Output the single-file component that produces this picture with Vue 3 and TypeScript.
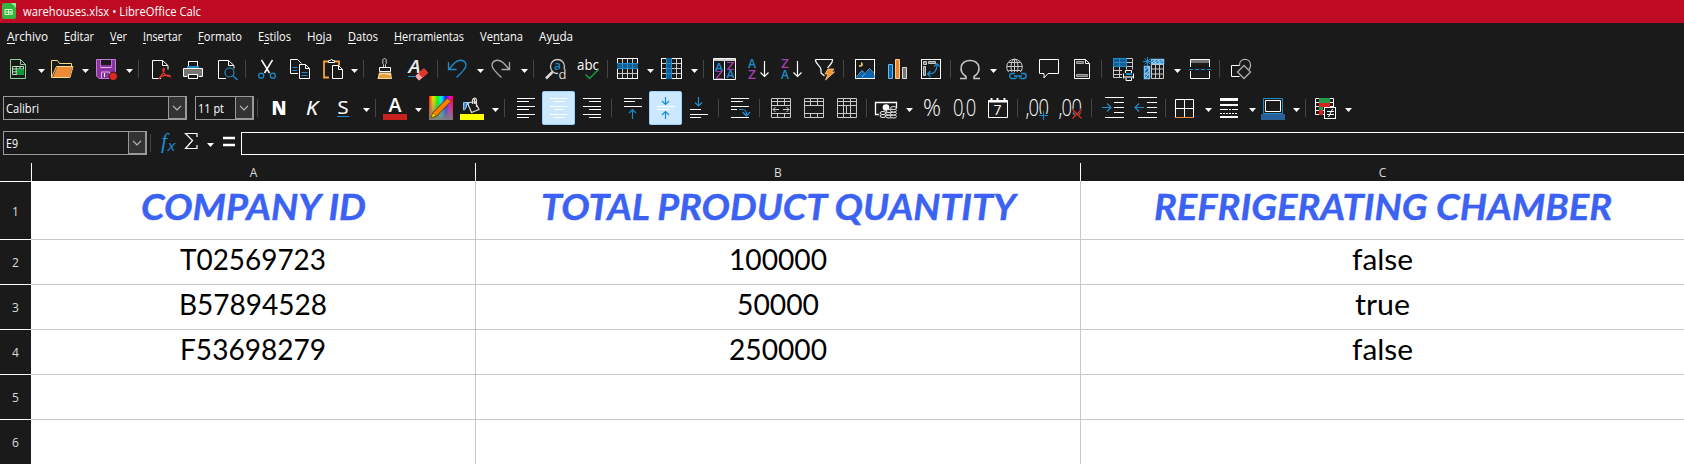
<script setup lang="ts">
interface Tool { x: number; name: string; width: number }
interface MenuEntry { text: string; w: number; ux: number; uw: number }
interface Cell { text: string; w: number }
interface Row { n: number; cells: Cell[] }

const menu: MenuEntry[] = [
  { text: 'Archivo', w: 41, ux: 0, uw: 8 },
  { text: 'Editar', w: 30, ux: 0, uw: 6 },
  { text: 'Ver', w: 17, ux: 0, uw: 7 },
  { text: 'Insertar', w: 39, ux: 0, uw: 3 },
  { text: 'Formato', w: 44, ux: 0, uw: 6 },
  { text: 'Estilos', w: 33, ux: 6, uw: 5 },
  { text: 'Hoja', w: 25, ux: 9, uw: 7 },
  { text: 'Datos', w: 30, ux: 0, uw: 8 },
  { text: 'Herramientas', w: 70, ux: 0, uw: 9 },
  { text: 'Ventana', w: 43, ux: 13, uw: 7 },
  { text: 'Ayuda', w: 34, ux: 14, uw: 7 },
]

/* Turns "start:name" pairs into consecutive slots whose widths fill the strip. */
function slots(spec: string): Tool[] {
  const raw = spec.trim().split(/\s+/).map((s) => {
    const [x, name] = s.split(':')
    return { x: Number(x), name }
  })
  return raw.map((t, i) => ({ ...t, width: (raw[i + 1]?.x ?? t.x + 24) - t.x }))
}

const standard = slots(`0:gap 6:new 38:arrow 50:open 82:arrow 95:save 126:arrow 138:sep
  149:pdf 181:print 215:preview 245:sep 255:cut 288:copy 321:paste 351:arrow 363:sep
  373:brush 406:clear 437:sep 446:undo 477:arrow 489:redo 521:arrow 533:sep
  544:find 576:spell 607:sep 616:rows 647:arrow 660:cols 691:arrow 703:sep
  713:sort 746:asc 779:desc 813:filter 843:sep 853:image 886:chart 919:pivot 950:sep
  958:omega 990:arrow 1004:link 1037:comment 1070:header 1101:sep
  1111:printarea 1143:freeze 1174:arrow 1188:split 1219:sep 1230:shapes`)

const formatting = slots(`257:sep 267:bold 300:italic 332:under 363:arrow 375:sep
  383:fontcolor 415:arrow 429:palette 460:bucket 492:arrow 504:sep
  514:left 547:center 580:right 611:sep 621:top 654:middle 687:bottom 718:sep
  728:wrap 759:sep 769:merge1 802:merge2 835:merge3 866:sep
  875:money 906:arrow 920:percent 953:number 986:calendar 1017:sep
  1026:adddec 1059:deldec 1091:sep 1101:indent 1134:outdent 1165:sep
  1174:borders 1205:arrow 1217:lines 1249:arrow 1261:bordercolor 1293:arrow 1305:sep
  1313:cond 1345:arrow`)

const formula = slots('150:sep 158:fx 181:sigma 207:arrow 217:equals')

const W = 'fill="none" stroke="#fff"'
const B = 'fill="none" stroke="#1e8bcd"'
const G = 'fill="none" stroke="#c9c9c9"'
const OS = 'font-family="Open Sans, sans-serif"'

const az = (x: number, y: number, ch: string, c: string, s = 12) =>
  `<text x="${x}" y="${y}" ${OS} font-size="${s}" font-weight="600" textLength="8" lengthAdjust="spacingAndGlyphs" fill="${c}">${ch}</text>`

const hl = '<rect x="-4.5" y="-4.5" width="32" height="33" rx="1.5" fill="#cce8ff" stroke="#99d1ff"/>'
/* Narrow light numerals; the glyph offsets are given before the horizontal squeeze. */
const digits = (xs: string, text: string) =>
  `<text transform="scale(.8 1)" x="${xs}" y="20" ${OS} font-weight="300" font-size="23" fill="#fff">${text}</text>`
const coin = (cx: number, cy: number) => `<ellipse cx="${cx}" cy="${cy}" rx="3" ry="1.5"/>`
const money =
  `<path d="M4 18.500H.5v-12h21v6" ${W} stroke-width="1.300"/><circle cx="11" cy="11.500" r="3.300" fill="#fff"/>` +
  `<g fill="#1a1a1a" stroke="#eee">` +
  [20, 17].map((y) => coin(8, y)).join('') +
  [20.500, 17.500, 15].map((y) => coin(14, y)).join('') +
  [20.500, 17.500, 14.500, 12].map((y) => coin(18.500, y)).join('') + '</g>'

const icons: Record<string, string> = {
  new: '<path d="M4.500 2.500h10l5 5v14h-15z M14.500 2.500v5h5" fill="none" stroke="#8fd19a"/><path d="M6.500 9.500h11v8h-11zM6.500 12h11M6.500 14.800h11M10.200 9.500v8M14 9.500v8" fill="none" stroke="#b9e6bf"/><rect x="11" y="12" width="7" height="6" fill="#12a13a"/><path d="M12.500 17v-2M14.500 17v-4M16.500 17v-3" stroke="#083"/>',
  open: '<path d="M1.500 20.500v-17h6l2 3h12v4M1.500 20.500l5-11h16.500l-3 11z" fill="none" stroke="#f7d98c"/><path d="M3 20l4-10h15.500l-3 10z" fill="#ee8a35"/>',
  save: '<path d="M1.500 2.500h19v19H4l-2.500-2.500z" fill="#8a359f" stroke="#c678d6"/><path d="M5.500 3h11v8h-11z" fill="#e8b2f0"/><path d="M6 3h10v6H6z" fill="#1a1a1a"/><path d="M6 8h10v2H6z" fill="#8a359f"/><path d="M6.500 21v-6h8v6" fill="#8a359f" stroke="#e6a5ef"/><path d="M9.500 16v4" stroke="#fff"/><circle cx="18.300" cy="19.300" r="4.200" fill="#e02820" stroke="#1a1a1a"/>',
  pdf: `<path d="M12 21.500H3.500v-18h10l5.500 5v4M13.500 3.500v5h5" ${W}/><path d="M10 22c1.500-3 5-6 5.300-9 .2-2.500-2-2-1.300 1 1 3.500 3 5.500 7.500 5.500-.5-1.500-4-1.700-7-.8S10 21.500 10 22" fill="none" stroke="#d9382f" stroke-width="1.300"/>`,
  print: `<rect x="7.500" y="4.500" width="9" height="7" ${W}/><rect x="6" y="9" width="12" height="2.500" fill="#1e8bcd"/><path d="M2 12h20v7H2z" fill="#77756f"/><path d="M2.500 19.500v-8h19v8h-4m-11 0h-4" ${W}/><rect x="7.500" y="17.500" width="9" height="4" fill="#1a1a1a" stroke="#fff"/>`,
  preview: `<path d="M11 21.500H3.500v-18h10l5.500 5v3M13.500 3.500v5h5" ${W}/><circle cx="14.500" cy="15.500" r="4.500" ${B} stroke-width="1.200"/><path d="M17.500 18.500l5 4.500" ${B} stroke-width="1.400"/>`,
  cut: `<path d="M6.500 3l8 13M17.500 3l-8 13" ${W} stroke-width="1.500"/><circle cx="6.200" cy="18.700" r="2.500" ${B} stroke-width="1.300"/><circle cx="17.800" cy="18.700" r="2.500" ${B} stroke-width="1.300"/>`,
  copy: `<path d="M10 16.500H2.500v-14h7l4 4" ${W}/><path d="M11.500 7.500h6l4 4v10h-10zM17.500 7.500v4h4" ${W}/><path d="M4.500 10.500h5M4.500 13.500h4.500M13.500 15.500h6M13.500 18.500h6" ${B}/>`,
  paste: `<path d="M8 20.500H3v-16h4m7 0h4v4" fill="none" stroke="#f5a23f" stroke-width="1.800"/><path d="M7.500 5.500v-2h2l1-1.500 1 1.500h2v2z" ${W}/><path d="M11.500 8.500h6l4 4v9h-10zM17.500 8.500v4h4" ${W}/>`,
  brush: '<path d="M10.500 10.500v-3l-.7-1V3c.5-2 3-2 3.400 0v3.500l-.7 1v3" fill="none" stroke="#ccc"/><path d="M6.500 10.500h11v4h-11z" fill="none" stroke="#fff"/><path d="M6 15.500h12l1 6.500H4.500z" fill="#f7d697"/><path d="M6.500 18l5-1 6 1.500.5 2.500H6z" fill="#e39a3c"/>',
  clear: `<text x="2.500" y="16" ${OS} font-size="18" font-style="italic" font-weight="600" textLength="12" lengthAdjust="spacingAndGlyphs" fill="#eee">A</text><path d="M2 19.500h7" stroke="#1e8bcd"/><g transform="rotate(-42 15.500 17.500)"><rect x="9.500" y="14.500" width="12" height="6" rx="1" fill="#f9a7ae"/><rect x="14" y="14.500" width="7.500" height="6" fill="#e0332c"/></g>`,
  undo: `<path d="M2.500 5v7.500h8M2.500 12.500l6-6.500c5-5 11.500-2.500 11.500 2.500 0 3-3.500 6.500-9.500 12" ${B} stroke-width="1.300"/>`,
  redo: '<path d="M20.500 5v7.500h-8M20.500 12.500l-6-6.500C9.500 1 3 3.500 3 8.500c0 3 3.500 6.500 9.500 12" fill="none" stroke="#aaa" stroke-width="1.300"/>',
  find: `<circle cx="13.500" cy="9.500" r="7" ${G} stroke-width="1.300"/><path d="M8.500 15L2 21.500" stroke="#ddd" stroke-width="2.500"/><text x="10" y="12.500" ${OS} font-size="12" font-weight="600" fill="#1e8bcd">a</text><rect x="14" y="12" width="10" height="11" fill="#1a1a1a"/><text x="14.500" y="22" ${OS} font-size="13" fill="#ddd">d</text>`,
  spell: `<text x="1" y="12.500" ${OS} font-size="15" textLength="22" lengthAdjust="spacingAndGlyphs" fill="#fff">abc</text><path d="M9.500 17.500l4 4L22.500 12.500" fill="none" stroke="#169b45" stroke-width="1.500"/>`,
  rows: `<rect x="1.500" y="1.500" width="20" height="20" ${W}/><path d="M6.500 2v19M11.500 2v19M16.500 2v19M2 16.500h19" ${G}/><rect x="1" y="6" width="21" height="6" fill="#145d91"/><path d="M1 6.500h21M1 11.500h21M6.500 6v6M11.500 6v6M16.500 6v6" ${B}/>`,
  cols: `<rect x="1.500" y="1.500" width="20" height="20" ${W}/><path d="M2 6.500h19M2 11.500h19M2 16.500h19M16.500 2v19" ${G}/><rect x="6" y="1" width="6" height="21" fill="#145d91"/><path d="M6.500 1v21M11.500 1v21M6 6.500h6M6 11.500h6M6 16.500h6" ${B}/>`,
  sort: `<path d="M.5 1.500h22v21H.5zM11.500 4v18" ${W}/><path d="M1 3h21" stroke="#ccc" stroke-width="2"/>${az(2, 13.500, 'A', '#1e8bcd', 11)}${az(13.500, 12.500, 'Z', '#a33fb0', 11)}${az(2, 22, 'Z', '#a33fb0', 11)}${az(13.500, 21, 'A', '#1e8bcd', 11)}`,
  asc: `${az(2, 10.500, 'A', '#1e8bcd')}${az(2, 22, 'Z', '#a33fb0')}<path d="M18.500 4v15.500m-4-4l4 4 4-4" ${W} stroke-width="1.200"/>`,
  desc: `${az(2, 10.500, 'Z', '#a33fb0')}${az(2, 22, 'A', '#1e8bcd')}<path d="M18.500 4v15.500m-4-4l4 4 4-4" ${W} stroke-width="1.200"/>`,
  filter: `<path d="M2.500 2.500h17c.5 3-3 6-5 8.500M2.500 2.500C2 6.500 8 9 8 13v3l3.500 3" ${W} stroke-width="1.200"/><path d="M15 12h6l-2.500 3h3l-9 8 2.500-6h-3z" fill="#f5912e" stroke="#f8cf85" stroke-width=".8"/>`,
  image: `<rect x="2.500" y="2.500" width="19" height="19" ${W}/><path d="M3.500 21l6-7 3 3 4-4.500 5 5.500V21z" fill="#0a64b0"/><path d="M3.500 20l5.500-6.500 2 2M9 20l7.500-8.500 4.500 5" fill="none" stroke="#5fb5f0"/><path d="M8.500 5.500c2 2 1 4.500-2.500 3.500 2 0 3-1.500 2.500-3.500" fill="#f5c36b" stroke="#f5c36b"/>`,
  chart: '<path d="M2.500 7.500h4v14h-4z" fill="#0a64b0" stroke="#6cb9ee"/><path d="M9.500 2.500h4v19h-4z" fill="#ef8430" stroke="#f8ce88"/><path d="M16.500 10.500h4v11h-4z" fill="#77756f" stroke="#ddd"/>',
  pivot: `<rect x="2.500" y="2.500" width="19" height="19" ${W}/><path d="M4.500 4.500h3v3h-3zM9.500 4.500h7v2h-7zM4.500 9.500h2v9h-2z" fill="#777" stroke="#ccc"/><path d="M8.500 17c7 0 9.500-3 9.500-10.500m-3 3l3-3 3 3M11.500 14l-3 3 3 3" ${B} stroke-width="1.200"/>`,
  omega: `<path d="M2 21.500h6v-2c-8-5-6-16 4-16s12 11 4 16v2h6" ${G} stroke-width="1.500"/>`,
  link: `<g ${G}><circle cx="10.500" cy="10" r="7.800"/><ellipse cx="10.500" cy="10" rx="3.500" ry="7.800"/><path d="M10.500 2v16M3 9.500h15M4.500 5.500h12M4.500 13.500h12"/></g><rect x="4.500" y="15" width="19" height="8" fill="#1a1a1a"/><path d="M11 16.500H8c-3 0-3 5 0 5h3q1.500 0 1.500-1.500M17 16.500h3c3 0 3 5 0 5h-3q-1.500 0-1.500-1.500M10 19h8" ${B} stroke-width="1.300"/>`,
  comment: `<path d="M2.500 2.500h19v14H11l-4 4.500v-4.500H2.500z" ${W}/>`,
  header: `<path d="M4.500 2.500h11l4 4v15h-15zM15.500 2.500v4h4" ${W}/><path d="M6.500 4.500h7v2h-7zM6.500 17.500h11v2h-11z" fill="#666" stroke="#aaa"/>`,
  printarea: `<path d="M2.500 1.500h19v19h-19zM2 5.500h19M2 9.500h19M2 13.500h19M2 17.500h19M8.500 2v19M15.500 2v19" ${G}/><path d="M2.500 1.500h13v8h-13zM2.500 5.500h13M8.500 1.500v8" fill="#145d91" stroke="#1e8bcd"/><path d="M11 12.500h13V24H11z" fill="#1a1a1a"/><path d="M14.500 16v-2.500h6V16M15 19.500v4h5.500v-4" ${W}/><path d="M15 17h6" stroke="#1e8bcd" stroke-width="2"/><path d="M13 20h10" stroke="#999" stroke-width="2"/><path d="M12.500 21.500v-5M22.500 21.500v-5" ${W}/>`,
  freeze: `<path d="M8.500 7.500h12v14h-12zM12.500 7v14M16.500 7v14M8 12h13M8 17h13" ${G}/><path d="M8.500 2.500h12v4h-12zM1.500 9.500h5v12h-5z" fill="#156aa8" stroke="#79c0f5" stroke-width="1.500"/><path d="M9 6l3-3v3l4-3v3l4-3M2 13l4-3v4l-4 3 4 0-4 4" fill="none" stroke="#a9d6f8"/><path d="M4.500 0v9M0 4.500h9M1.500 1.500l6 6M7.500 1.500l-6 6" ${B}/>`,
  split: `<path d="M2.500 10V2.500h19V10M2.500 14v7.500h19V14" ${W}/><path d="M3 4.500h18" stroke="#77756f" stroke-width="3"/><path d="M1 12.500h22" stroke="#1e8bcd" stroke-dasharray="4 2"/>`,
  shapes: `<path d="M9.500 19.500h-8v-11h8" ${W}/><path d="M9.500 9v-1c0-7.500 11-7.500 11 0 0 3-1 4-1.500 4.500" fill="none" stroke="#b5b5b5" stroke-width="1.200"/><path d="M14 8.500l6.500 6.500-6.500 6.500L7.500 15z" fill="#1a1a1a" stroke="#aaa" stroke-width="1.400"/>`,

  bold: `<text x="4.500" y="19" ${OS} font-size="19.500" font-weight="800" textLength="15" lengthAdjust="spacingAndGlyphs" fill="#fff">N</text>`,
  italic: `<text x="6" y="19" ${OS} font-size="19.500" font-weight="400" font-style="italic" textLength="12" lengthAdjust="spacingAndGlyphs" fill="#fff" stroke="#fff" stroke-width=".2">K</text>`,
  under: `<text x="5.500" y="18" ${OS} font-size="19" font-weight="400" textLength="11" lengthAdjust="spacingAndGlyphs" fill="#fff" stroke="#fff" stroke-width=".2">S</text><path d="M5 20.500h12" stroke="#1e8bcd"/>`,
  fontcolor: `<text x="5.500" y="16" ${OS} font-size="19" font-weight="600" textLength="13" lengthAdjust="spacingAndGlyphs" fill="#fff">A</text><rect y="18" width="24" height="6" fill="#c9211e"/>`,
  palette: '<defs><linearGradient id="hue"><stop offset="0" stop-color="#f20"/><stop offset=".17" stop-color="#fd0"/><stop offset=".35" stop-color="#1f0"/><stop offset=".52" stop-color="#0ef"/><stop offset=".7" stop-color="#12f"/><stop offset=".86" stop-color="#f0e"/><stop offset="1" stop-color="#f02"/></linearGradient><linearGradient id="fade" x2="0" y2="1"><stop offset=".1" stop-color="#808080" stop-opacity="0"/><stop offset="1" stop-color="#808080"/></linearGradient></defs><path d="M0 0h24v24H0z" fill="url(#hue)"/><path d="M0 0h24v24H0z" fill="url(#fade)"/><path d="M2 22l2-5.500L18.500 2 22 5.500 7.500 20z" fill="#ff8000" stroke="#6b3400"/><path d="M2 22l2-5 3 2.500z" fill="#ffe600" stroke="#665a00" stroke-width=".6"/>',
  bucket: '<path d="M3.500 14V6.500h5v2h-2V11l-2 3z" fill="#3f8ac4" stroke="#8ec4ef"/><path d="M7.500 7l7.500-1.500L19 13.500l-7.500 3zM12.500 8V4c1-2.500 3.500-2.500 4 0v7M14.500 8V3" fill="none" stroke="#ddd" stroke-width="1.200"/><rect y="18" width="24" height="6" fill="#ff0"/>',
  left: `<path d="M3 2.500h18M3 5.500h12M3 10.500h18M3 13.500h12M3 18.500h18M3 21.500h12" ${W}/>`,
  center: `${hl}<path d="M3 2.500h18M6 5.500h12M3 10.500h18M7 13.500h10M3 18.500h18M6 21.500h12" ${W}/>`,
  right: `<path d="M3 2.500h18M9 5.500h12M3 10.500h18M9 13.500h12M3 18.500h18M9 21.500h12" ${W}/>`,
  top: `<path d="M3 2.500h18M3 5.500h11M3 10.500h18" ${W}/><path d="M11.500 23v-9.500M8 17l3.500-3.500L15 17" ${B} stroke-width="1.200"/>`,
  middle: `${hl}<path d="M3 10.500h18M3 13.500h13" ${W}/><path d="M11.500 1v7M8 5l3.500 3.500L15 5M11.500 23v-7M8 19l3.500-3.500L15 19" ${B} stroke-width="1.200"/>`,
  bottom: `<path d="M3 13.500h11M3 18.500h18M3 21.500h11" ${W}/><path d="M11.500 1v9M8 6.500l3.500 3.500L15 6.500" ${B} stroke-width="1.200"/>`,
  wrap: `<path d="M3 2.500h18M3 5.500h12M3 10.500h18M3 13.500h6M3 21.500h18" ${W}/><path d="M11 13.500h3q5 0 4.500 6M14.500 16l4 4 3.500-4" ${B} stroke-width="1.200"/>`,
  merge1: `<path d="M2.500 2.500h19v19h-19zM2 5.500h20M2 9.500h20M2 17.500h20M8.500 2v8M15.500 2v8M8.500 17v5M15.500 17v5" ${G}/><path d="M4 13.500h6M6.500 11L4 13.500 6.500 16M20 13.500h-6M17.500 11l2.500 2.500-2.500 2.500" ${G}/>`,
  merge2: `<path d="M2.500 2.500h19v19h-19zM2 5.500h20M2 9.500h20M2 17.500h20M8.500 2v8M15.500 2v8M8.500 17v5M15.500 17v5" ${G}/>`,
  merge3: `<path d="M2.500 2.500h19v19h-19zM2 5.500h20M2 9.500h20M2 17.500h20M8.500 2v20M15.500 2v20M11.500 9.500v8" ${G}/>`,
  money,
  percent: `<text x="3" y="20" ${OS} font-weight="300" font-size="23.500" textLength="18" lengthAdjust="spacingAndGlyphs" fill="#fff">%</text>`,
  number: digits('0 10.500 16', '0,0'),
  calendar: `<path d="M2.500 4.500h19v17h-19z" ${W}/><path d="M2 5.500h20M5.500 2v4M11.500 2v4M18.500 2v4" stroke="#fff" stroke-width="2"/><text x="7.500" y="18.500" ${OS} font-size="14" fill="#fff">7</text>`,
  adddec: `${digits('-.5 3 15.500', ',00')}<path d="M17.500 15v9M13 19.500h9" stroke="#1a1a1a" stroke-width="3"/><path d="M17.500 15v9M13 19.500h9" ${B}/>`,
  deldec: `${digits('-.5 3 15.500', ',00')}<path d="M13.500 13.500l9 9M22.500 13.500l-9 9" stroke="#1a1a1a" stroke-width="3"/><path d="M13.500 13.500l9 9M22.500 13.500l-9 9" stroke="#e0302a" stroke-width="1.200"/>`,
  indent: `<path d="M4 1.500h19M13 6.500h10M13 11.500h10M13 16.500h10M4 21.500h19" ${W}/><path d="M1 11.500h9M6 7.500l4 4-4 4" ${B} stroke-width="1.200"/>`,
  outdent: `<path d="M4 1.500h19M13 6.500h10M13 11.500h10M13 16.500h10M4 21.500h19" ${W}/><path d="M10 11.500H1M5 7.500l-4 4 4 4" ${B} stroke-width="1.200"/>`,
  borders: `<path d="M1.500 21V3.500h18V21M10.500 4v17M2 12.500h17" ${W}/><path d="M1 21.500h19" stroke="#ee8733"/>`,
  lines: '<g stroke="#fff"><path d="M3 3.500h18" stroke-width="3"/><path d="M3 9h18" stroke-width="2"/><path d="M3 13.500h18" stroke-dasharray="8 1 2 1"/><path d="M3 17.500h18" stroke-dasharray="2 1"/><path d="M3 21h18" stroke-width="2"/></g>',
  bordercolor: `<path d="M2.500 2.500h19v15h-19z" ${B}/><path d="M4.500 4.500h15v11h-15z" ${W}/><rect y="18" width="24" height="6" fill="#2a6099"/>`,
  cond: `<path d="M2.500 2.500h18v16h-18zM2 6.500h18M2 10.500h18M2 14.500h18M6.500 2v17M16.500 2v17" ${W}/><path d="M6 2h11v5H6zM6 10h4v5H6z" fill="#259b4a"/><path d="M6 7h11v4H6zM6 14h4v5H6z" fill="#d8221d"/><rect x="11.500" y="11.500" width="11" height="11" fill="#1a1a1a" stroke="#fff"/><path d="M14 15.500h7M14 18.500h7M19.500 13l-4 8" ${W}/>`,

  fx: '<text x="3" y="17" font-family="Liberation Serif, serif" font-size="22" font-style="italic" fill="#1e8bcd">f</text><text x="9.500" y="19.500" font-family="Open Sans, sans-serif" font-size="15" font-style="italic" textLength="8" lengthAdjust="spacingAndGlyphs" fill="#1e8bcd">x</text>',
  sigma: `<path d="M16 6V2.500H4.500l7 7-7 8H16V14" ${W} stroke-width="1.200"/>`,
  equals: '<path d="M6 7h12M6 14h12" stroke="#fff" stroke-width="2.500"/>',
  arrow: '<path d="M0 12h7l-3.500 4z" fill="#fff"/>',
  sep: '<path d="M.5 3v18" stroke="#454545"/>',
  gap: '',
}

const columns = ['A', 'B', 'C']
const rows: Row[] = [
  { n: 1, cells: [{ text: 'COMPANY ID', w: 225 }, { text: 'TOTAL PRODUCT QUANTITY', w: 475 }, { text: 'REFRIGERATING CHAMBER', w: 458 }] },
  { n: 2, cells: [{ text: 'T02569723', w: 146 }, { text: '100000', w: 98 }, { text: 'false', w: 61 }] },
  { n: 3, cells: [{ text: 'B57894528', w: 148 }, { text: '50000', w: 82 }, { text: 'true', w: 55 }] },
  { n: 4, cells: [{ text: 'F53698279', w: 146 }, { text: '250000', w: 98 }, { text: 'false', w: 61 }] },
  { n: 5, cells: [{ text: '', w: 0 }, { text: '', w: 0 }, { text: '', w: 0 }] },
  { n: 6, cells: [{ text: '', w: 0 }, { text: '', w: 0 }, { text: '', w: 0 }] },
]
</script>

<template>
  <div class="window">
    <header class="titlebar">
      <svg class="logo" width="14" height="16">
        <path d="M2 0h8l4 4v10q0 2-2 2H2q-2 0-2-2V2q0-2 2-2z" fill="#35b53f" />
        <path d="M9 0l5 5V0z" fill="#90e890" />
        <path d="M3 6.500h7v5H3zM3 9h7M6.500 6.500v5" fill="none" stroke="#d9f7c8" />
        <path d="M7 8h4v4H7z" fill="#9be38d" />
      </svg>
      <svg class="label" width="179" height="23">
        <text x="0" y="15.500" textLength="178" lengthAdjust="spacingAndGlyphs">warehouses.xlsx • LibreOffice Calc</text>
      </svg>
    </header>

    <nav class="menubar">
      <svg v-for="m in menu" :key="m.text" class="label" :width="m.w" height="30">
        <text x="0" y="18" :textLength="m.w" lengthAdjust="spacingAndGlyphs">{{ m.text }}</text>
        <rect :x="m.ux" y="20" :width="m.uw" height="1" fill="#fff" />
      </svg>
    </nav>

    <div class="toolbar standard">
      <div v-for="t in standard" :key="t.x" class="slot" :style="{ width: t.width + 'px' }">
        <svg class="icon" width="24" height="24" v-html="icons[t.name]" />
      </div>
    </div>

    <div class="toolbar formatting">
      <div class="combo family">
        <svg class="label value" width="34" height="22"><text x="0" y="16" textLength="33" lengthAdjust="spacingAndGlyphs">Calibri</text></svg>
        <span class="drop"><svg width="10" height="6"><path d="M1 .8l4 4 4-4" /></svg></span>
      </div>
      <div class="combo size">
        <svg class="label value" width="27" height="22"><text x="0" y="16" textLength="26" lengthAdjust="spacingAndGlyphs">11 pt</text></svg>
        <span class="drop"><svg width="10" height="6"><path d="M1 .8l4 4 4-4" /></svg></span>
      </div>
      <div v-for="t in formatting" :key="t.x" class="slot" :style="{ width: t.width + 'px' }">
        <svg class="icon" width="24" height="24" v-html="icons[t.name]" />
      </div>
    </div>

    <div class="toolbar formula">
      <div class="combo cellname">
        <svg class="label value" width="13" height="22"><text x="0" y="16" textLength="12" lengthAdjust="spacingAndGlyphs">E9</text></svg>
        <span class="drop"><svg width="10" height="6"><path d="M1 .8l4 4 4-4" /></svg></span>
      </div>
      <div v-for="t in formula" :key="t.x" class="slot" :style="{ width: t.width + 'px' }">
        <svg class="icon" width="24" height="24" v-html="icons[t.name]" />
      </div>
      <div class="input-line"></div>
    </div>

    <main class="sheet">
      <div class="line heads">
        <div class="corner"></div>
        <div v-for="c in columns" :key="c" class="colhead">{{ c }}</div>
      </div>
      <div v-for="r in rows" :key="r.n" class="line" :class="{ first: r.n === 1 }">
        <div class="rowhead">{{ r.n }}</div>
        <div v-for="(c, i) in r.cells" :key="i" class="cell">
          <svg v-if="c.text" class="content" :width="c.w" height="44">
            <text x="0" :y="r.n === 1 ? 39 : 30" :textLength="c.w" lengthAdjust="spacingAndGlyphs">{{ c.text }}</text>
          </svg>
        </div>
      </div>
    </main>
  </div>
</template>

<style>
body {
  margin: 0;
  background: #1a1a1a;
}
</style>

<style scoped>
.window {
  width: 1684px;
  height: 464px;
  overflow: hidden;
  display: flex;
  flex-direction: column;
  background: #1a1a1a;
  color: #fff;
  font: 12px "Open Sans", "Noto Sans", sans-serif;
}
svg {
  display: block;
  overflow: visible;
  flex: none;
}
.label {
  fill: #fff;
}
.titlebar {
  height: 23px;
  flex: none;
  display: flex;
  gap: 7px;
  padding-left: 2px;
  background: #be0a22;
}
.logo {
  margin-top: 3px;
}
.menubar {
  height: 34px;
  flex: none;
  display: flex;
  gap: 16px;
  padding-left: 7px;
}
.toolbar {
  display: flex;
  flex: none;
}
.slot {
  flex: none;
  height: 24px;
}
.standard {
  height: 39px;
}
.formatting {
  height: 35px;
}
.formula {
  height: 32px;
}
.combo {
  box-sizing: border-box;
  flex: none;
  height: 24px;
  display: flex;
  justify-content: space-between;
  border: 1px solid #999;
  border-right-width: 2px;
  padding-left: 2px;
}
.family {
  width: 184px;
  margin-left: 3px;
}
.size {
  width: 59px;
  margin-left: 8px;
  margin-right: 3px;
}
.cellname {
  width: 144px;
  margin: 0 3px;
}
.drop {
  box-sizing: border-box;
  width: 17px;
  height: 22px;
  display: grid;
  place-items: center;
  background: #333;
  border-left: 1px solid #999;
  border-bottom: 1px solid #999;
}
.drop path {
  fill: none;
  stroke: #bbb;
  stroke-width: 1.2;
}
.input-line {
  box-sizing: border-box;
  flex: 1;
  height: 23px;
  margin-top: 1px;
  border: 1px solid #fff;
  border-right: 0;
}
.sheet {
  flex: 1;
}
.line {
  display: grid;
  grid-template-columns: 31px 445px 605px 603px;
  height: 45px;
}
.line.first {
  height: 58px;
}
.heads {
  height: 19px;
  grid-template-columns: 31px 444px 605px 604px;
}
.corner {
  border-bottom: 1px solid #fff;
}
.colhead {
  height: 18px;
  border-left: 1px solid #fff;
  text-align: center;
  font-size: 12px;
  line-height: 19px;
  color: #ddd;
}
.rowhead {
  box-sizing: border-box;
  display: grid;
  place-items: center;
  padding-top: 1px;
  border-bottom: 1px solid #fff;
  background: #1a1a1a;
  color: #ddd;
}
.cell {
  background: #fff;
  border-right: 1px solid #c8c8c8;
  border-bottom: 1px solid #c8c8c8;
  display: flex;
  justify-content: center;
}
.cell:last-child {
  border-right: 0;
}
.content {
  font-family: Lato, sans-serif;
  font-size: 28px;
  fill: #000;
}
.first .content {
  font-size: 36px;
  font-weight: 700;
  font-style: italic;
  fill: #3b62f3;
  stroke: #3b62f3;
  stroke-width: 0.4;
}
.heads + .line .cell {
  margin-top: -1px;
}
</style>
